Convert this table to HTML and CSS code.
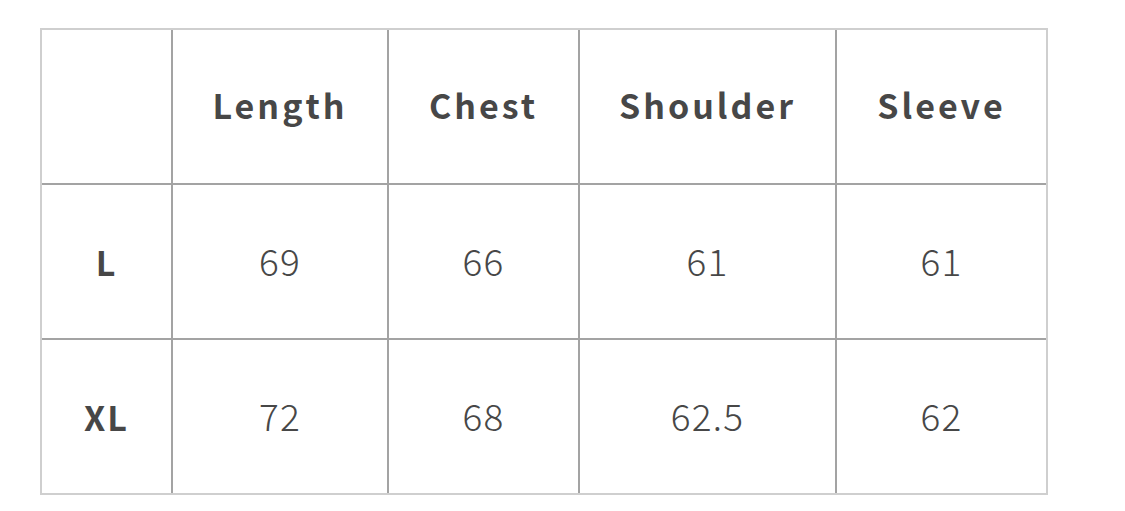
FILE: index.html
```html
<!DOCTYPE html>
<html>
<head>
<meta charset="utf-8">
<link rel="stylesheet" href="styles.css">
</head>
<body>
<div class="frame">
  <div class="grid">
    <div class="cell"></div>
    <div class="cell head">Length</div>
    <div class="cell head">Chest</div>
    <div class="cell head">Shoulder</div>
    <div class="cell head">Sleeve</div>
    <div class="cell size">L</div>
    <div class="cell num">69</div>
    <div class="cell num">66</div>
    <div class="cell num">61</div>
    <div class="cell num">61</div>
    <div class="cell size">XL</div>
    <div class="cell num">72</div>
    <div class="cell num">68</div>
    <div class="cell num">62.5</div>
    <div class="cell num">62</div>
  </div>
</div>
</body>
</html>
```
FILE: styles.css
```css
html, body {
  margin: 0;
  padding: 0;
  background: #fff;
}
body {
  padding: 28px 0 0 40px;
  font-family: "Noto Sans CJK SC", "Noto Sans", sans-serif;
  color: #474747;
}
.frame {
  width: 1004px;
  border: 2px solid #cfcfcf;
}
.grid {
  display: grid;
  grid-template-columns: 129px 214px 189px 255px 209px;
  grid-template-rows: 153px 153px 153px;
  gap: 2px;
  background: #a3a3a3;
}
.cell {
  background: #fff;
  display: flex;
  align-items: center;
  justify-content: center;
}
.head {
  font-size: 34px;
  font-weight: 700;
  letter-spacing: 3px;
  padding-bottom: 4px;
}
.size {
  font-size: 34px;
  font-weight: 700;
  letter-spacing: 2px;
}
.num {
  font-size: 37px;
  font-weight: 300;
  letter-spacing: 1.2px;
  padding-bottom: 3px;
}
```
